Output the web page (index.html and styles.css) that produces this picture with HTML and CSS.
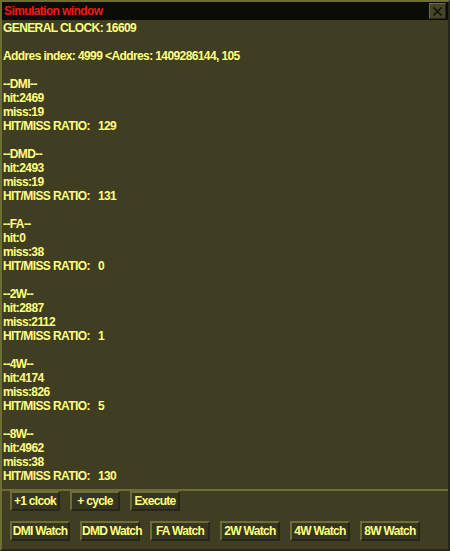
FILE: index.html
```html
<!DOCTYPE html>
<html>
<head>
<meta charset="utf-8">
<link rel="stylesheet" href="styles.css">
</head>
<body>
<div class="window">
  <div class="titlebar">
    <span class="title">Simulation window</span>
    <span class="close"><svg width="11" height="11" viewBox="0 0 11 11"><path d="M1.5 1.5 L9.5 9.5 M9.5 1.5 L1.5 9.5" stroke="#111108" stroke-width="1.6"/></svg></span>
  </div>
  <div class="content">
<div class="log">GENERAL CLOCK: 16609

Addres index: 4999 &lt;Addres: 1409286144, 105

--DMI--
hit:2469
miss:19
HIT/MISS RATIO:   129

--DMD--
hit:2493
miss:19
HIT/MISS RATIO:   131

--FA--
hit:0
miss:38
HIT/MISS RATIO:   0

--2W--
hit:2887
miss:2112
HIT/MISS RATIO:   1

--4W--
hit:4174
miss:826
HIT/MISS RATIO:   5

--8W--
hit:4962
miss:38
HIT/MISS RATIO:   130</div>
  </div>
  <div class="controls">
    <div class="row">
      <button class="btn small">+1 clcok</button>
      <button class="btn small">+ cycle</button>
      <button class="btn small">Execute</button>
    </div>
    <div class="row">
      <button class="btn wide">DMI Watch</button>
      <button class="btn wide">DMD Watch</button>
      <button class="btn wide">FA Watch</button>
      <button class="btn wide">2W Watch</button>
      <button class="btn wide">4W Watch</button>
      <button class="btn wide">8W Watch</button>
    </div>
  </div>
</div>
</body>
</html>
```
FILE: styles.css
```css
html, body {
  margin: 0;
  padding: 0;
  background: #3f3e22;
}
body {
  width: 450px;
  height: 551px;
  overflow: hidden;
  font-family: "Liberation Sans", Arial, sans-serif;
  font-weight: bold;
  font-size: 12px;
  letter-spacing: -0.6px;
  color: #ffff80;
}
.window {
  box-sizing: border-box;
  width: 450px;
  height: 551px;
  border-top: 2px solid #6e6d35;
  border-left: 2px solid #6e6d35;
  border-right: 2px solid #26261a;
  border-bottom: 2px solid #26261a;
  display: flex;
  flex-direction: column;
  background: #3f3e22;
}
.titlebar {
  height: 18px;
  background: #0c0c07;
  display: flex;
  align-items: center;
  justify-content: space-between;
  padding: 0 2px 0 2px;
}
.title {
  color: #ff1414;
  font-size: 12px;
  letter-spacing: -0.6px;
}
.close {
  box-sizing: border-box;
  width: 17px;
  height: 16px;
  background: #46452a;
  border-top: 1px solid #6e6d40;
  border-left: 1px solid #6e6d40;
  border-right: 1px solid #26261a;
  border-bottom: 1px solid #26261a;
  display: flex;
  align-items: center;
  justify-content: center;
}
.content {
  flex: 1;
  padding: 1px 1px 0 1px;
}
.log {
  white-space: pre;
  line-height: 14px;
}
.controls {
  border-top: 2px solid #6e6d35;
  padding: 0 0 8px 8px;
  display: flex;
  flex-direction: column;
  gap: 10px;
}
.row {
  display: flex;
  gap: 10px;
}
.btn {
  box-sizing: border-box;
  height: 20px;
  padding: 0;
  margin: 0;
  white-space: nowrap;
  overflow: visible;
  background: #36351f;
  color: #ffff80;
  font-family: inherit;
  font-weight: bold;
  font-size: 12px;
  letter-spacing: -0.7px;
  border-top: 2px solid #6e6d35;
  border-left: 2px solid #6e6d35;
  border-right: 2px solid #26261a;
  border-bottom: 2px solid #26261a;
}
.small { width: 50px; }
.wide { width: 60px; }
```
